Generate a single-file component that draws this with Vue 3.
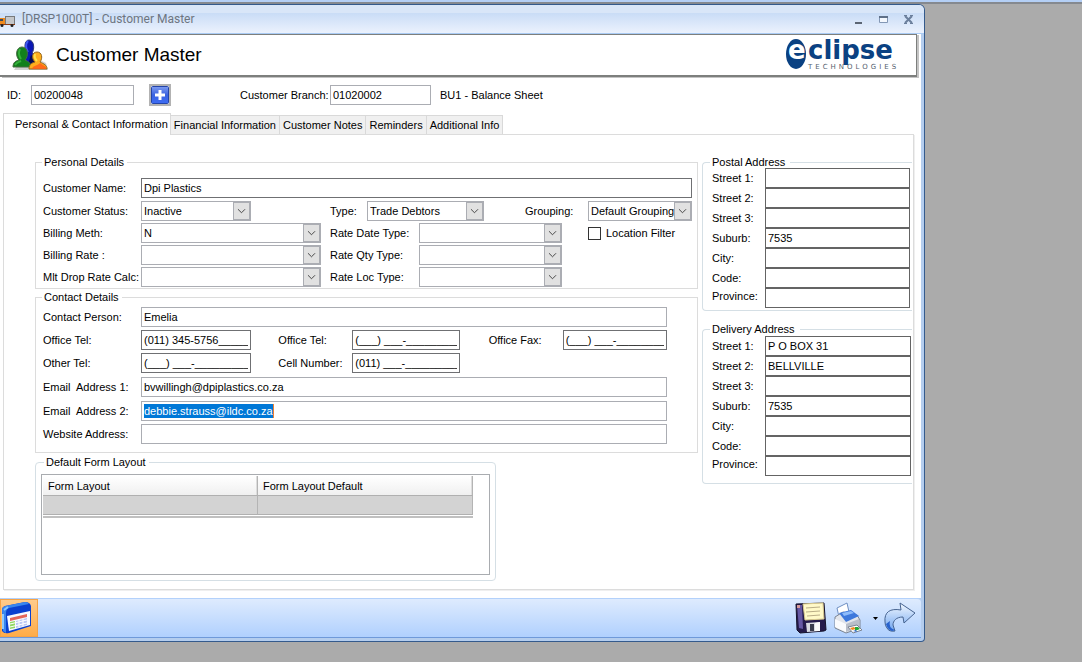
<script setup>
import { ref, reactive } from 'vue'

const tabs = ['Personal & Contact Information', 'Financial Information', 'Customer Notes', 'Reminders', 'Additional Info']
const active = ref(0)

const form = reactive({
  id: '00200048',
  branch: '01020002',
  name: 'Dpi Plastics',
  person: 'Emelia',
  tel1: '(011) 345-5756______',
  tel2: '(___) ___-_________',
  fax: '(___) ___-_________',
  other: '(___) ___-_________',
  cell: '(011) ___-_________',
  email1: 'bvwillingh@dpiplastics.co.za',
  email2: 'debbie.strauss@ildc.co.za',
  website: '',
  location: false,
})

const rateRows = [
  { id: 'meth', label: 'Billing Meth:', value: 'N', id2: 'rdate', label2: 'Rate Date Type:' },
  { id: 'rate', label: 'Billing Rate :', value: '', id2: 'rqty', label2: 'Rate Qty Type:' },
  { id: 'drop', label: 'Mlt Drop Rate Calc:', value: '', id2: 'rloc', label2: 'Rate Loc Type:' },
]

const lines = ['Street 1:', 'Street 2:', 'Street 3:', 'Suburb:', 'City:', 'Code:', 'Province:']
const addresses = reactive([
  { key: 'postal', title: 'Postal Address', values: ['', '', '', '7535', '', '', ''] },
  { key: 'delivery', title: 'Delivery Address', values: ['P O BOX 31', 'BELLVILLE', '', '7535', '', '', ''] },
])
</script>

<template>
  <div class="desktop">
    <div class="strip"></div>
    <main class="window">
      <header class="titlebar">
        <svg class="truck" width="16" height="14" viewBox="0 0 16 14">
          <rect x="5.500" y="2.500" width="9" height="8" fill="#c4c6c9" stroke="#77797c" />
          <path d="M0 4h5v7H0z" fill="#f08a1d" />
          <path d="M0 5h3v2H0z" fill="#3b4a5c" />
          <path d="M0 10h15v1H0z" fill="#8c3a12" />
          <circle cx="2" cy="11.500" r="1.500" fill="#222" /><circle cx="12" cy="11.500" r="1.500" fill="#222" />
        </svg>
        <span class="caption">[DRSP1000T] - Customer Master</span>
        <button class="winbtn" aria-label="Minimise"><svg width="11" height="11" viewBox="0 0 11 11"><path d="M2 8h7v2H2z" fill="#5b6573" /></svg></button>
        <button class="winbtn" aria-label="Maximise"><svg width="11" height="11" viewBox="0 0 11 11"><path d="M1.500 2.500h8v6h-8z" fill="#f3f7fd" stroke="#8397b5" /><path d="M1 2h9v2H1z" fill="#5f7088" /></svg></button>
        <button class="winbtn" aria-label="Close"><svg width="11" height="11" viewBox="0 0 11 11"><path d="M2 2l7 7M9 2l-7 7" stroke="#6b7f9c" stroke-width="2" /><path d="M1 1.500h3M7 1.500h3M1 9.500h3M7 9.500h3" stroke="#6b7f9c" /></svg></button>
      </header>

      <div class="body">
        <div class="banner">
          <svg class="people" width="38" height="36" viewBox="0 0 38 36">
            <path d="M3 33h34l-2-7-6-3H10z" fill="#777" opacity=".35" />
            <path d="M12 28c0-6 1-10 4-12-3-4-3-13 2-13s6 9 3 13c4 1 5 5 5 12z" fill="#0a17b4" stroke="#2e3a78" />
            <path d="M17 4c-3 3-2 8 0 11" fill="none" stroke="#3f58f2" stroke-width="2" />
            <path d="M20 18c3 2 4 5 3 10l-6-1z" fill="#060c50" />
            <path d="M2 30c0-5 3-6 6-7-4-4-3-13 3-13s7 9 3 13c4 2 6 3 6 7z" fill="#12801c" stroke="#466b42" />
            <path d="M9 12c-2 4-1 7 1 10M4 28c2-3 4-3 6-4" fill="none" stroke="#35b13b" stroke-width="2" />
            <path d="M18 32c0-5 3-6 6-7-4-4-3-10 2-10s6 6 3 10c4 2 7 3 7 7z" fill="#ffae1c" stroke="#94661f" />
            <path d="M21 32c1-4 5-3 8-6l6 4v2z" fill="#ff5a1a" opacity=".8" />
            <path d="M24 17c-1 3 0 5 2 7" fill="none" stroke="#ffe34d" stroke-width="2" />
          </svg>
          <h1>Customer Master</h1>
          <svg class="logo" width="122" height="42" viewBox="0 0 122 42" role="img" aria-label="eclipse technologies">
            <ellipse cx="10" cy="20" rx="10" ry="15" fill="#0a4182" />
            <text x="2" y="25" class="mark light">e</text>
            <text x="22" y="25" class="mark">clipse</text>
            <text x="22" y="35" class="sub">TECHNOLOGIES</text>
          </svg>
        </div>

        <div class="idrow">
          <label for="id">ID:</label>
          <input id="id" v-model="form.id" class="idbox" />
          <button class="add" aria-label="Add">
            <svg width="18" height="18" viewBox="0 0 18 18">
              <defs><linearGradient id="plus" x1="0" y1="0" x2="0" y2="1"><stop offset="0" stop-color="#7e9cf0" /><stop offset=".5" stop-color="#3a62e0" /><stop offset="1" stop-color="#3d6cf4" /></linearGradient></defs>
              <rect x=".5" y=".5" width="17" height="17" rx="1" fill="url(#plus)" stroke="#2444a8" />
              <path d="M7.500 4h3v3.500H14v3h-3.500V14h-3v-3.500H4v-3h3.500z" fill="#fff" />
            </svg>
          </button>
          <label for="branch" class="branchlabel">Customer Branch:</label>
          <input id="branch" v-model="form.branch" class="branchbox" />
          <span class="branchname">BU1 - Balance Sheet</span>
        </div>

        <nav class="tabs" role="tablist">
          <button v-for="(t, i) in tabs" :key="t" role="tab" :aria-selected="i === active" :class="{ on: i === active }" @click="active = i">{{ t }}</button>
        </nav>

        <section class="page">
          <div class="left">
            <fieldset class="square personal">
              <legend>Personal Details</legend>
              <div class="row name">
                <label for="name">Customer Name:</label>
                <input id="name" v-model="form.name" class="dark" />
              </div>
              <div class="row status">
                <label for="status">Customer Status:</label>
                <span class="combo"><select id="status"><option>Inactive</option></select><svg viewBox="0 0 17 18"><path d="M4.500 7l4 4 4-4" /></svg></span>
                <label for="type" class="second">Type:</label>
                <span class="combo"><select id="type"><option>Trade Debtors</option></select><svg viewBox="0 0 17 18"><path d="M4.500 7l4 4 4-4" /></svg></span>
                <label for="group" class="third">Grouping:</label>
                <span class="combo"><select id="group"><option>Default Grouping</option></select><svg viewBox="0 0 17 18"><path d="M4.500 7l4 4 4-4" /></svg></span>
              </div>
              <div v-for="(r, i) in rateRows" :key="r.id" class="row rates">
                <label :for="r.id">{{ r.label }}</label>
                <span class="combo"><select :id="r.id"><option>{{ r.value }}</option></select><svg viewBox="0 0 17 18"><path d="M4.500 7l4 4 4-4" /></svg></span>
                <label :for="r.id2" class="second">{{ r.label2 }}</label>
                <span class="combo"><select :id="r.id2"><option></option></select><svg viewBox="0 0 17 18"><path d="M4.500 7l4 4 4-4" /></svg></span>
                <label v-if="i === 0" class="check"><input v-model="form.location" type="checkbox" />Location Filter</label>
              </div>
            </fieldset>

            <fieldset class="square contact">
              <legend>Contact Details</legend>
              <div class="row wide">
                <label for="person">Contact Person:</label>
                <input id="person" v-model="form.person" />
              </div>
              <div class="row tel">
                <label for="tel1">Office Tel:</label>
                <input id="tel1" v-model="form.tel1" class="dark" />
                <label for="tel2" class="second">Office Tel:</label>
                <input id="tel2" v-model="form.tel2" class="dark" />
                <label for="fax" class="third">Office Fax:</label>
                <input id="fax" v-model="form.fax" class="dark" />
              </div>
              <div class="row tel">
                <label for="other">Other Tel:</label>
                <input id="other" v-model="form.other" class="dark" />
                <label for="cell" class="second">Cell Number:</label>
                <input id="cell" v-model="form.cell" class="dark" />
              </div>
              <div class="row wide mail">
                <label for="email1">Email&nbsp; Address 1:</label>
                <input id="email1" v-model="form.email1" />
              </div>
              <div class="row wide mail">
                <label id="email2label">Email&nbsp; Address 2:</label>
                <div class="editbox" role="textbox" contenteditable="true" aria-labelledby="email2label"><mark>{{ form.email2 }}</mark></div>
              </div>
              <div class="row wide">
                <label for="website">Website Address:</label>
                <input id="website" v-model="form.website" />
              </div>
            </fieldset>

            <fieldset class="round layouts">
              <legend>Default Form Layout</legend>
              <div class="listbox">
                <table>
                  <thead><tr><th>Form Layout</th><th>Form Layout Default</th></tr></thead>
                  <tbody><tr><td></td><td></td></tr></tbody>
                </table>
              </div>
            </fieldset>
          </div>

          <div class="right">
            <fieldset v-for="a in addresses" :key="a.key" class="round address" :class="a.key">
              <legend>{{ a.title }}</legend>
              <div v-for="(l, i) in lines" :key="l" class="line">
                <label :for="a.key + i">{{ l }}</label>
                <input :id="a.key + i" v-model="a.values[i]" />
              </div>
            </fieldset>
          </div>
        </section>
      </div>

      <footer class="toolbar">
        <button class="view" aria-label="Form view">
          <svg width="32" height="32" viewBox="0 0 32 32">
            <path d="M1 8Q1 5 4 4L24 0Q29 0 30 4V24L8 31Q3 32 1 29z" fill="#0b40cf" />
            <path d="M1 8Q1 5 4 4L24 0Q27 0 28 2L8 6Q5 7 5 11V31L2 29z" fill="#3a86ee" />
            <path d="M2 12v15M3 8l4-3" stroke="#8cc8ff" stroke-width="2" />
            <path d="M6 14L29 9V23L8 29z" fill="#f7faff" />
            <path d="M9 16L26 12v3L9 19z" fill="#e4665a" />
            <path d="M9 20l5-1v7l-5 1z" fill="#93d964" />
            <path d="M15 19l11-3v7l-11 3z" fill="#bcc8f4" />
            <path d="M9 22l17-4M9 25l17-4M18 18v7M22 17v7" stroke="#fff" />
          </svg>
        </button>
        <span class="grow"></span>
        <button class="tool" aria-label="Save">
          <svg width="32" height="32" viewBox="0 0 32 32">
            <path d="M1 2l28-1 2 27-2 1-24 2-3-3z" fill="#251b4c" stroke="#15122a" />
            <path d="M2 3l5 0 1 24-4-1z" fill="#6658a4" />
            <path d="M8 2l20-1 1 16-19 1z" fill="#fff9c8" stroke="#d7c98e" />
            <path d="M11 6l14-1M11 10l14-1M12 14l13-1" stroke="#b9ad87" />
            <path d="M11 21l14-1v9l-13 1z" fill="#d9dbe2" /><path d="M15 22l4 0v7l-4 0z" fill="#393b4c" /><path d="M20 21l5-1v9l-5 0z" fill="#fafafa" />
            <path d="M2 3h3v3H2z" fill="#d79a9d" />
          </svg>
        </button>
        <button class="tool" aria-label="Print">
          <svg width="32" height="32" viewBox="0 0 32 32">
            <path d="M4 6L14 1l2 9-10 5z" fill="#fff" stroke="#6f8fc2" />
            <path d="M2 15l8-5 14 3 3 5v8l-14 5L2 26z" fill="#e2e5eb" stroke="#7c8492" />
            <path d="M6 11l12-3 8 6-13 6z" fill="#3d78dc" /><path d="M9 11l9-2 3 2-10 3z" fill="#8dbbfa" />
            <path d="M2 17l11 5v8L2 25z" fill="#fafbfd" /><path d="M13 22l13-5v8l-13 5z" fill="#b9bfca" />
            <path d="M15 25l9-2 5 5-9 3z" fill="#fff" stroke="#7c8492" />
            <path d="M17 26l4-1 2 2-4 1z" fill="#f08a20" /><path d="M22 25l3 0 2 2-5 2z" fill="#25a838" /><path d="M20 29l3-1 1 2z" fill="#2d66d2" />
          </svg>
        </button>
        <button class="drop" aria-label="Print options"><svg width="5" height="3" viewBox="0 0 5 3"><path d="M0 0h5L2.500 3z" fill="#000" /></svg></button>
        <button class="tool" aria-label="Exit">
          <svg width="32" height="32" viewBox="0 0 32 32">
            <defs><linearGradient id="arrow" x1="0" y1="0" x2="0" y2="1"><stop offset="0" stop-color="#f4f9ff" /><stop offset="1" stop-color="#6fa5f0" /></linearGradient></defs>
            <path d="M1 20C0 10 6 6 17 8L16 1L31 11L20 21L19 15C12 15 9 19 9 23L11 29Q5 30 3 26Q1 24 1 20z" fill="url(#arrow)" stroke="#46638f" />
            <path d="M6 19Q4 26 11 28L8 29Q3 27 2 22z" fill="#2962cc" />
          </svg>
        </button>
      </footer>
    </main>
  </div>
</template>

<style>
body { margin: 0; background: #ababab; }
</style>

<style scoped>
* { box-sizing: border-box; }
.desktop { min-height: 100vh; background: #ababab; font: 11px/14px "Liberation Sans", Arial, sans-serif; color: #000; }
.strip { height: 4px; background: #b4cff5; border-bottom: 2px solid #85898f; }
.window { width: calc(100% - 157px); min-width: 800px; border: 1px solid #345a8c; border-left: 0; border-radius: 0 6px 4px 0; overflow: hidden; background: #b4cdee; }
button { font: inherit; color: inherit; border: 0; background: none; padding: 0; }
.titlebar { display: flex; align-items: center; height: 29px; padding-right: 3px; background: linear-gradient(#d9e6f8 0 8px, #c9dcf6 8px, #eaf1fd 27px); border-bottom: 1px solid #a9cbf4; }
.truck { margin-top: 4px; }
.caption { flex: 1; padding-left: 6px; font: 12px/16px Roboto, sans-serif; color: #6d7580; }
.winbtn { width: 25px; height: 20px; display: grid; place-items: center; }
.body { background: #fff; margin-right: 3px; padding-bottom: 8px; }
.banner { display: flex; align-items: center; height: 43px; margin-right: 4px; border: 1px solid #7d7f7d; border-left: 0; border-bottom-width: 2px; box-shadow: 2px 1px #c4c4c4; background: #fff; padding: 0 8px 0 11px; }
h1 { flex: 1; margin: 0; padding-left: 7px; font-weight: 400; font-size: 19px; line-height: 24px; }
.logo { overflow: visible; }
.mark { font: bold 26px "DejaVu Sans", sans-serif; fill: #0a4182; }
.mark.light { fill: #fff; }
.sub { font: 7px "DejaVu Sans", sans-serif; letter-spacing: 3px; fill: #55606e; }
input, select, .editbox { font: inherit; color: inherit; height: 20px; width: 100%; min-width: 0; margin: 0; padding: 0 2px; border: 1px solid #abadb3; border-radius: 0; background: #fff; outline: 0; }
input.dark { border-color: #6f7073; }
.idrow { display: flex; align-items: center; height: 35px; padding-left: 7px; }
.idrow label:first-child { width: 24px; }
.idbox { width: 103px; }
.add { width: 22px; height: 22px; margin-left: 15px; border: 2px solid #b2b2b2; }
.add svg { display: block; }
.branchlabel { margin-left: 69px; width: 90px; }
.branchbox { width: 101px; }
.branchname { margin-left: 9px; }
.tabs { display: flex; align-items: flex-end; padding-left: 3px; height: 22px; }
.tabs button { height: 19px; padding: 0 3px; border: 1px solid #d9d9d9; border-left: 0; border-bottom: 0; background: #f0f0f0; white-space: nowrap; }
.tabs button.on { height: 22px; padding: 0 2px 2px 11px; border-left: 1px solid #d9d9d9; background: #fff; position: relative; z-index: 1; margin-bottom: -1px; }
.page { display: grid; grid-template-columns: 663fr 210fr; gap: 4px; margin: 0 7px 0 3px; padding: 20px 1px 8px 31px; border: 1px solid #dcdcdc; box-shadow: 1px 1px #efefef; }
fieldset { margin: 0; min-width: 0; padding: 0 5px 0 7px; border: 1px solid #dcdcdc; }
legend { padding: 0 3px 0 2px; margin-left: -1px; height: 14px; line-height: 14px; }
.round { border-color: #d5dfe5; border-radius: 4px; }
.personal { padding-bottom: 1px; }
.row { display: grid; align-items: center; margin-top: 2px; }
.name { grid-template-columns: 98px 1fr; margin-top: 9px; }
.status { grid-template-columns: 98px 110fr 116px 117fr 104px 104fr; margin-top: 3px; }
.status .second { padding-left: 79px; }
.status .third { padding-left: 41px; }
.rates { grid-template-columns: 98px 180fr 98px 143fr 130px; }
.rates .second { padding-left: 9px; }
.check { display: flex; align-items: center; gap: 5px; padding-left: 26px; }
.check input { appearance: none; width: 13px; height: 13px; border: 1px solid #333; padding: 0; }
.check input:checked { background: #333; box-shadow: inset 0 0 0 2px #fff; }
.combo { display: grid; grid-template-columns: 1fr 17px; border: 1px solid #abadb3; height: 20px; }
.combo select { appearance: none; grid-area: 1 / 1 / 2 / 3; height: 18px; border: 0; padding: 0 0 0 2px; }
.combo svg { grid-area: 1 / 2; width: 17px; height: 18px; background: #e1e1e1; border: 1px solid #abadb3; pointer-events: none; }
.combo path { fill: none; stroke: #333; }
.contact { margin-top: 1px; padding-bottom: 8px; padding-right: 30px; }
.contact .row { margin-top: 3px; }
.contact .mail { margin-top: 4px; }
.wide { grid-template-columns: 98px 1fr; }
.tel { grid-template-columns: 98px 110fr 101px 107fr 103px 104fr; }
.tel .second { padding-left: 27px; }
.tel .third { padding-left: 29px; }
.editbox { white-space: nowrap; overflow: hidden; line-height: 18px; }
mark { background: #0078d7; color: #fff; display: inline-block; line-height: 14px; border-right: 1px solid #f08030; }
.layouts { margin: 2px 202px 0 0; padding: 5px; }
.layouts legend { margin-left: 3px; }
.listbox { border: 1px solid #a9acb0; height: 101px; padding: 1px 16px 1px 1px; }
table { width: 100%; border-collapse: separate; border-spacing: 0; table-layout: fixed; border-bottom: 2px solid #c0c0c0; padding-bottom: 1px; }
th { height: 20px; padding: 0 5px; text-align: left; font-weight: 400; background: linear-gradient(#fff, #f0f0f0); border-right: 1px solid #b4b4b4; border-bottom: 1px solid #b0b0b0; box-shadow: inset -1px 0 #ddd; }
td { height: 19px; padding: 0; background: #d3d3d3; border-right: 1px solid #b4b4b4; border-bottom: 1px solid #b0b0b0; }
.address { border-right: 0; border-top-right-radius: 0; border-bottom-right-radius: 0; padding: 0 2px 2px 9px; }
.address legend { padding: 0 5px 0 2px; margin-left: -2px; }
.line { display: grid; grid-template-columns: 53px 1fr; align-items: center; }
.line input { border-color: #646464; }
.line:last-child label { padding-bottom: 5px; }
.postal legend + .line { margin-top: -1px; }
.delivery { margin-top: 11px; padding-right: 1px; padding-bottom: 7px; }
.toolbar { display: flex; align-items: center; height: 40px; margin-right: 3px; background: linear-gradient(#deebfe, #b0d0fe); border-top: 1px solid #b3d1fb; border-bottom: 1px solid #6f99d9; border-radius: 0 4px 0 0; padding-right: 5px; margin-bottom: 3px; }
.grow { flex: 1; }
.view { width: 38px; height: 38px; background: linear-gradient(#ffcb8b, #ffac48); border: 1px solid #f5a347; padding: 0; }
.view svg, .tool svg { display: block; }
.tool { margin-left: 6px; }
.drop { width: 7px; margin-left: 7px; display: grid; place-items: center; }
.drop + .tool { margin-left: 5px; }
</style>
